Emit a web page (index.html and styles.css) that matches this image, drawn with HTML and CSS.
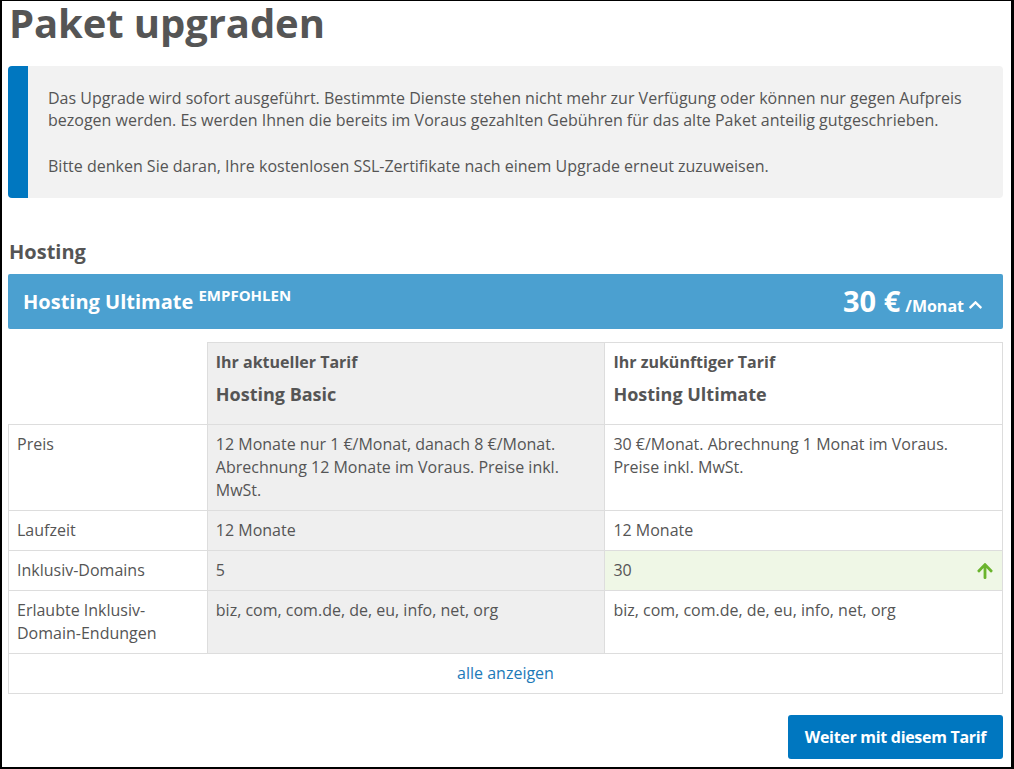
FILE: index.html
```html
<!DOCTYPE html>
<html lang="de">
<head>
<meta charset="utf-8">
<title>Paket upgraden</title>
<link rel="stylesheet" href="styles.css">
</head>
<body>
<div class="frame">
  <h1 class="title">Paket upgraden</h1>
  <div class="info">
    <p>Das Upgrade wird sofort ausgeführt. Bestimmte Dienste stehen nicht mehr zur Verfügung oder können nur gegen Aufpreis bezogen werden. Es werden Ihnen die bereits im Voraus gezahlten Gebühren für das alte Paket anteilig gutgeschrieben.</p>
    <p>Bitte denken Sie daran, Ihre kostenlosen SSL-Zertifikate nach einem Upgrade erneut zuzuweisen.</p>
  </div>
  <h2 class="section">Hosting</h2>
  <div class="bar">
    <div class="bar-name">Hosting Ultimate <sup class="badge">EMPFOHLEN</sup></div>
    <div class="bar-price"><span class="amount">30 €</span> <span class="per">/Monat</span>
      <svg class="chev" viewBox="0 0 448 512" width="15" height="15"><path fill="#fff" d="M240.97 142.06l194.35 194.34c9.37 9.37 9.37 24.57 0 33.94l-22.67 22.67c-9.36 9.36-24.52 9.38-33.91.04L224 238.82 69.26 393.05c-9.39 9.34-24.55 9.32-33.91-.04l-22.67-22.67c-9.37-9.37-9.37-24.57 0-33.94L207.03 142.06c9.37-9.37 24.57-9.37 33.94 0z"/></svg>
    </div>
  </div>
  <table class="cmp">
    <colgroup><col class="c1"><col class="c2"><col class="c3"></colgroup>
    <tr class="head">
      <th class="blank"></th>
      <th class="cur"><div class="lbl">Ihr aktueller Tarif</div><div class="pkg">Hosting Basic</div></th>
      <th><div class="lbl">Ihr zukünftiger Tarif</div><div class="pkg">Hosting Ultimate</div></th>
    </tr>
    <tr>
      <td>Preis</td>
      <td class="cur">12 Monate nur 1 €/Monat, danach 8 €/Monat. Abrechnung 12 Monate im Voraus. Preise inkl. MwSt.</td>
      <td>30 €/Monat. Abrechnung 1 Monat im Voraus. Preise inkl. MwSt.</td>
    </tr>
    <tr>
      <td>Laufzeit</td>
      <td class="cur">12 Monate</td>
      <td>12 Monate</td>
    </tr>
    <tr>
      <td>Inklusiv-Domains</td>
      <td class="cur">5</td>
      <td class="up"><span>30</span>
        <svg class="arrow" viewBox="0 0 448 512" width="18" height="18"><path fill="#6ab42d" d="M34.9 289.5l-22.2-22.2c-9.4-9.4-9.4-24.6 0-33.9L207 39c9.4-9.4 24.6-9.4 33.9 0l194.3 194.3c9.4 9.4 9.4 24.6 0 33.9L413 289.4c-9.5 9.5-25 9.3-34.3-.4L264 168.6V456c0 13.3-10.7 24-24 24h-32c-13.3 0-24-10.7-24-24V168.6L69.2 289.1c-9.3 9.8-24.8 10-34.3.4z"/></svg>
      </td>
    </tr>
    <tr>
      <td>Erlaubte Inklusiv-Domain-Endungen</td>
      <td class="cur">biz, com, com.de, de, eu, info, net, org</td>
      <td>biz, com, com.de, de, eu, info, net, org</td>
    </tr>
    <tr>
      <td class="all" colspan="3"><a href="#" class="link">alle anzeigen</a></td>
    </tr>
  </table>
  <div class="actions">
    <button class="btn" type="button">Weiter mit diesem Tarif</button>
  </div>
</div>
</body>
</html>
```
FILE: styles.css
```css
html, body {
  margin: 0;
  padding: 0;
  background: #fff;
}
body {
  font-family: "Open Sans", "Liberation Sans", sans-serif;
  color: #555;
  font-size: 16px;
  line-height: 23px;
}
.frame {
  box-sizing: border-box;
  width: 1014px;
  height: 769px;
  border-style: solid;
  border-color: #000;
  border-width: 1px 3px 2px 2px;
  padding: 0 8px 0 6px;
  overflow: hidden;
}
.title {
  margin: -3px 0 0;
  font-size: 40px;
  line-height: 50px;
  font-weight: 700;
  color: #555;
  padding-left: 1px;
  letter-spacing: -0.1px;
}
.info {
  margin-top: 18px;
  background: #f2f2f2;
  border-left: 20px solid #0077c0;
  border-radius: 4px;
  padding: 21px 20px;
  line-height: 22px;
}
.info p {
  margin: 0 0 24px;
}
.info p:last-child {
  margin-bottom: 0;
}
.section {
  margin: 42px 0 10px 1px;
  font-size: 20px;
  line-height: 24px;
  font-weight: 700;
  color: #555;
}
.bar {
  height: 55px;
  box-sizing: border-box;
  background: #4ba0d0;
  border-radius: 2px;
  color: #fff;
  display: flex;
  align-items: center;
  justify-content: space-between;
  padding: 0 20px 0 15px;
  font-weight: 700;
}
.bar-name {
  font-size: 20px;
  line-height: 24px;
  padding-top: 1px;
}
.badge {
  font-size: 15px;
  position: relative;
  top: -2px;
  vertical-align: top;
  line-height: 15px;
}
.bar-price {
  display: flex;
  align-items: baseline;
}
.amount {
  font-size: 29px;
  line-height: 32px;
  margin-right: 5px;
}
.per {
  font-size: 16px;
}
.chev {
  margin-left: 4px;
  align-self: center;
  position: relative;
  top: 3px;
}
.cmp {
  margin-top: 13px;
  width: 100%;
  border-collapse: collapse;
  table-layout: fixed;
}
.c1 { width: 20%; }
.c2 { width: 40%; }
.c3 { width: 40%; }
.cmp th, .cmp td {
  border: 1px solid #ddd;
  padding: 8px;
  text-align: left;
  vertical-align: top;
  font-weight: 400;
}
.cmp th.blank {
  border: none;
}
.cmp .cur {
  background: #efefef;
}
.lbl {
  font-weight: 700;
}
.pkg {
  font-weight: 700;
  font-size: 18px;
  margin: 9px 0 10px;
}
.cmp td.up {
  background: #eff7e6;
  position: relative;
}
.arrow {
  position: absolute;
  right: 8px;
  top: 11px;
}
.cmp td.all {
  text-align: center;
}
.link {
  color: #1d7ab8;
  text-decoration: none;
}
.actions {
  display: flex;
  justify-content: flex-end;
  margin-top: 21px;
}
.btn {
  font-family: "Open Sans", "Liberation Sans", sans-serif;
  background: #0077c0;
  color: #fff;
  border: none;
  border-radius: 3px;
  font-size: 16px;
  font-weight: 700;
  height: 44px;
  width: 215px;
  padding: 0;
  letter-spacing: -0.3px;
}
```
